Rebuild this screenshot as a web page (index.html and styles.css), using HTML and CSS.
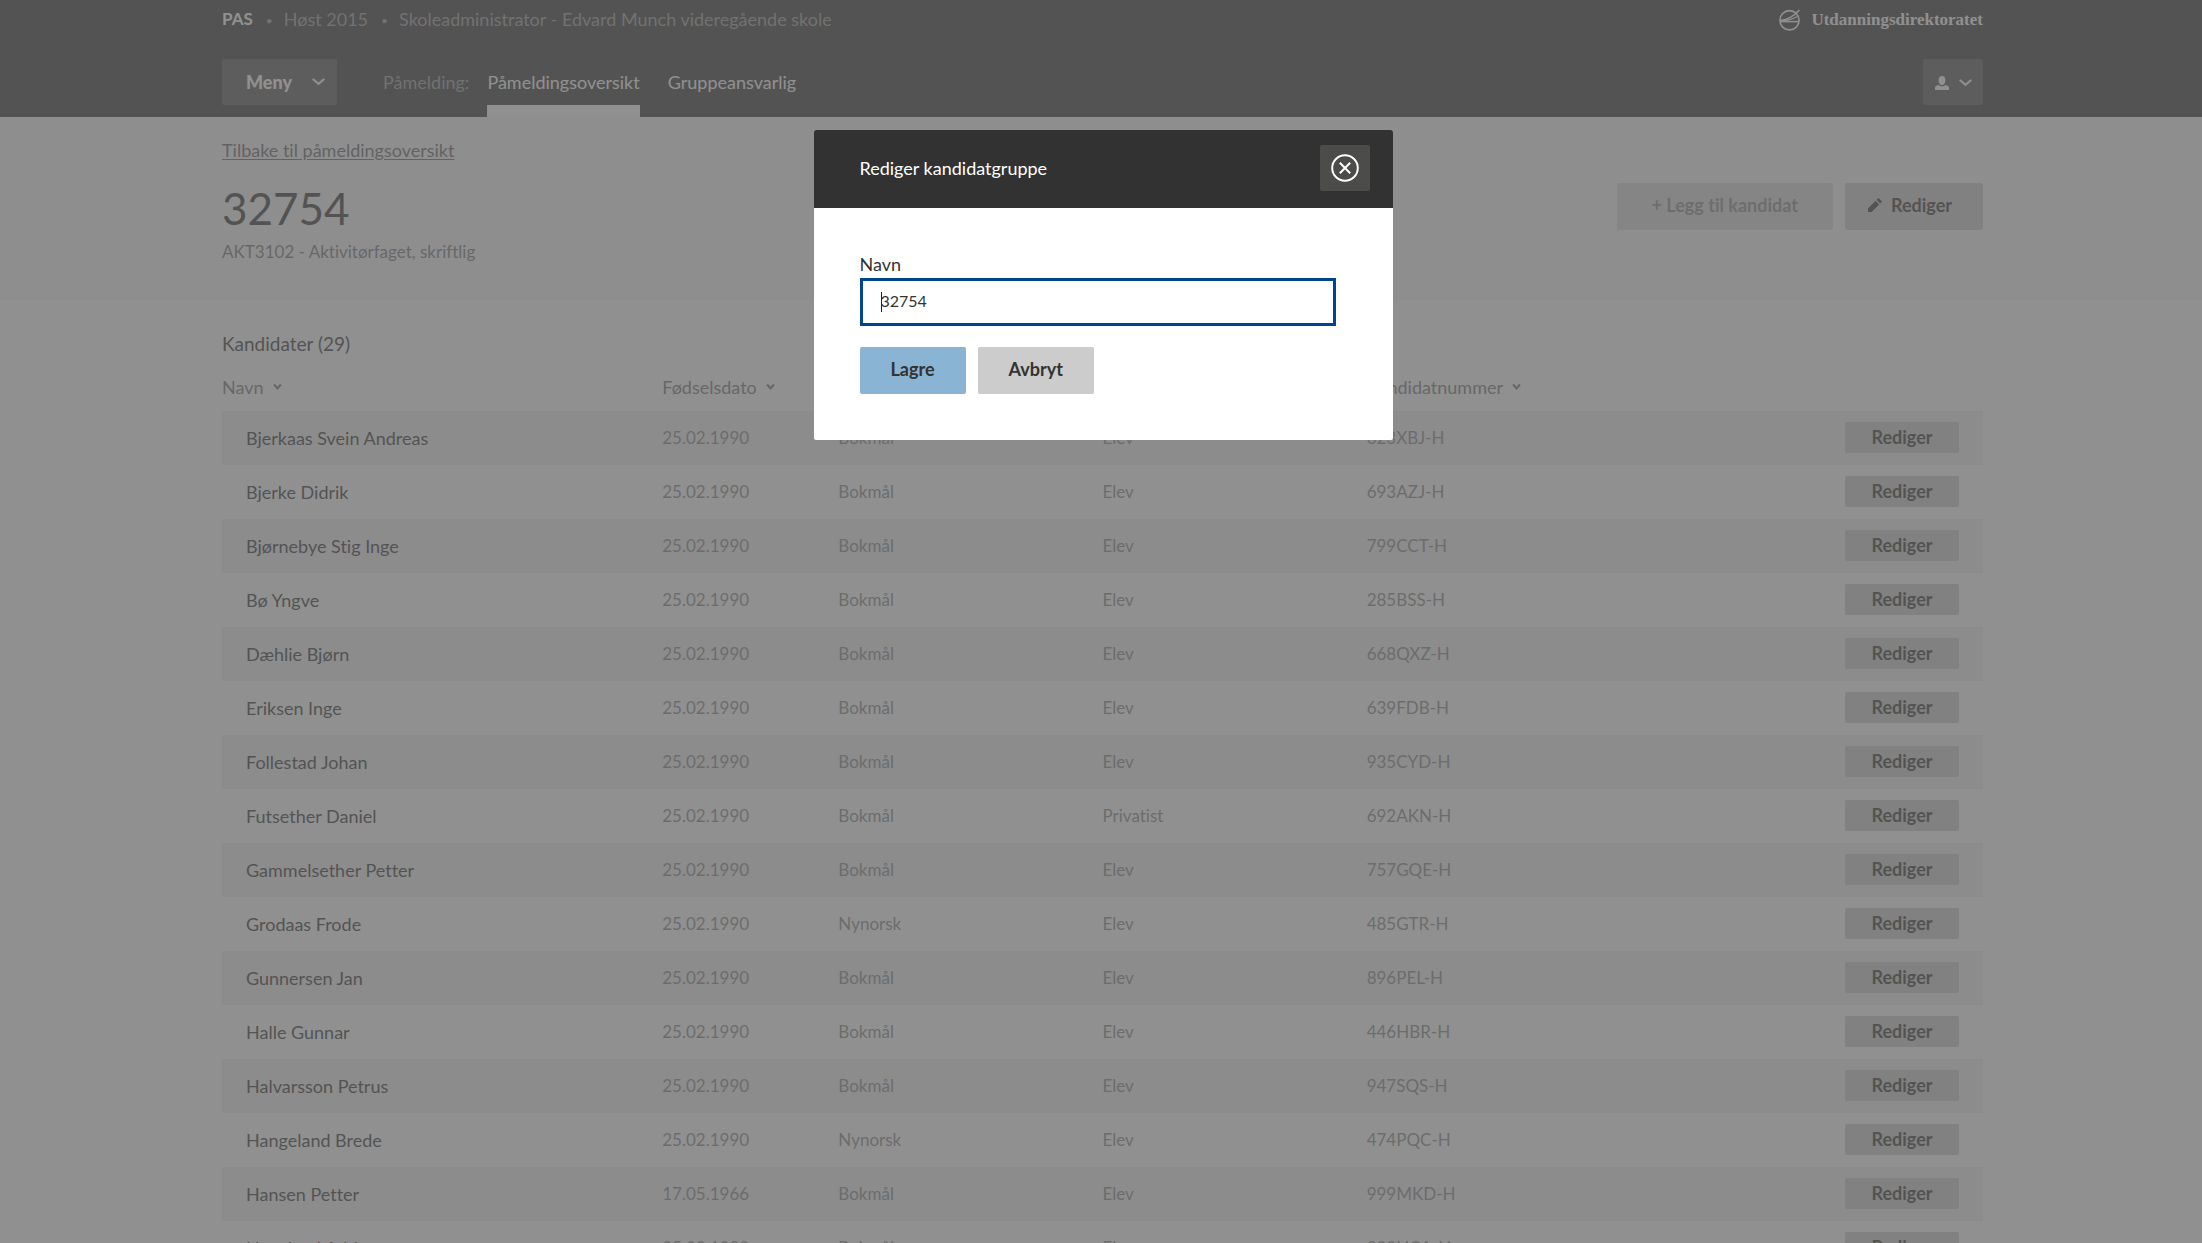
FILE: index.html
```html
<!DOCTYPE html>
<html lang="nb">
<head>
<meta charset="utf-8">
<title>PAS – Kandidatgruppe 32754</title>
<link rel="stylesheet" href="styles.css">
</head>
<body>
<svg class="sprite" aria-hidden="true">
  <symbol id="chevron" viewBox="0 0 14 8"><path d="M1.5 1.2 L7 6 L12.5 1.2" fill="none" stroke="currentColor" stroke-width="2.2" stroke-linecap="round"/></symbol>
  <symbol id="sort" viewBox="0 0 10 8"><path d="M1.2 1.2 L5 5.6 L8.8 1.2" fill="none" stroke="currentColor" stroke-width="2.4"/></symbol>
</svg>

<header class="site-header">
  <div class="topline">
    <ul class="context">
      <li class="product">PAS</li>
      <li>Høst 2015</li>
      <li>Skoleadministrator - Edvard Munch videregående skole</li>
    </ul>
    <a class="brand" href="#">
      <svg class="brand-mark" viewBox="0 0 22 22" aria-hidden="true"><g fill="none" stroke="currentColor"><circle cx="10.5" cy="11.3" r="9.6" stroke-width="1.7"/><path d="M1 11.6 C8 11 15 7 20.5 1" stroke-width="1.6"/><path d="M1 12 C8 11.6 14 10 18.5 7.4" stroke-width="1.2"/><path d="M1 12.6 H20" stroke-width="1.5"/></g></svg>
      <span>Utdanningsdirektoratet</span>
    </a>
  </div>
  <div class="mainline">
    <button class="menu-button" type="button">Meny <svg class="chevron" aria-hidden="true"><use href="#chevron"/></svg></button>
    <nav class="tabs">
      <span class="tabs-label">Påmelding:</span>
      <a class="tab active" href="#">Påmeldingsoversikt</a>
      <a class="tab" href="#">Gruppeansvarlig</a>
    </nav>
    <button class="user-button" type="button" aria-label="Bruker">
      <svg class="person" viewBox="0 0 14 14" aria-hidden="true"><path d="M7 0 C9.3 0 10.4 1.8 10.4 4.4 C10.4 7 9 9 7 9 C5 9 3.6 7 3.6 4.4 C3.6 1.8 4.7 0 7 0 Z M0 14 V11.6 C0 10 1.6 9.6 3.6 8.9 C5 10.6 9 10.6 10.4 8.9 C12.4 9.6 14 10 14 11.6 V14 Z" fill="currentColor"/></svg>
      <svg class="chevron" aria-hidden="true"><use href="#chevron"/></svg>
    </button>
  </div>
</header>

<section class="hero">
  <a class="back" href="#">Tilbake til påmeldingsoversikt</a>
  <div class="hero-row">
    <div>
      <h1>32754</h1>
      <p class="subject">AKT3102 - Aktivitørfaget, skriftlig</p>
    </div>
    <div class="actions">
      <button class="button add" type="button" disabled>+ Legg til kandidat</button>
      <button class="button edit" type="button"><svg class="pencil" viewBox="0 0 14 14" aria-hidden="true"><path d="M0 14 V10.4 L7.6 2.8 L11.2 6.4 L3.6 14 Z M8.6 1.8 L10.4 0 L14 3.6 L12.2 5.4 Z" fill="currentColor"/></svg>Rediger</button>
    </div>
  </div>
</section>

<main class="content">
  <h2>Kandidater (29)</h2>
  <table class="candidates">
    <thead>
      <tr><th class="c-name">Navn<svg class="sort"><use href="#sort"/></svg></th><th class="c-date">Fødselsdato<svg class="sort"><use href="#sort"/></svg></th><th class="c-lang">Målform<svg class="sort"><use href="#sort"/></svg></th><th class="c-type">Type<svg class="sort"><use href="#sort"/></svg></th><th colspan="2">Kandidatnummer<svg class="sort"><use href="#sort"/></svg></th></tr>
    </thead>
    <tbody>
      <tr><td>Bjerkaas Svein Andreas</td><td>25.02.1990</td><td>Bokmål</td><td>Elev</td><td>623XBJ-H</td><td><button class="row-button" type="button">Rediger</button></td></tr>
      <tr><td>Bjerke Didrik</td><td>25.02.1990</td><td>Bokmål</td><td>Elev</td><td>693AZJ-H</td><td><button class="row-button" type="button">Rediger</button></td></tr>
      <tr><td>Bjørnebye Stig Inge</td><td>25.02.1990</td><td>Bokmål</td><td>Elev</td><td>799CCT-H</td><td><button class="row-button" type="button">Rediger</button></td></tr>
      <tr><td>Bø Yngve</td><td>25.02.1990</td><td>Bokmål</td><td>Elev</td><td>285BSS-H</td><td><button class="row-button" type="button">Rediger</button></td></tr>
      <tr><td>Dæhlie Bjørn</td><td>25.02.1990</td><td>Bokmål</td><td>Elev</td><td>668QXZ-H</td><td><button class="row-button" type="button">Rediger</button></td></tr>
      <tr><td>Eriksen Inge</td><td>25.02.1990</td><td>Bokmål</td><td>Elev</td><td>639FDB-H</td><td><button class="row-button" type="button">Rediger</button></td></tr>
      <tr><td>Follestad Johan</td><td>25.02.1990</td><td>Bokmål</td><td>Elev</td><td>935CYD-H</td><td><button class="row-button" type="button">Rediger</button></td></tr>
      <tr><td>Futsether Daniel</td><td>25.02.1990</td><td>Bokmål</td><td>Privatist</td><td>692AKN-H</td><td><button class="row-button" type="button">Rediger</button></td></tr>
      <tr><td>Gammelsether Petter</td><td>25.02.1990</td><td>Bokmål</td><td>Elev</td><td>757GQE-H</td><td><button class="row-button" type="button">Rediger</button></td></tr>
      <tr><td>Grodaas Frode</td><td>25.02.1990</td><td>Nynorsk</td><td>Elev</td><td>485GTR-H</td><td><button class="row-button" type="button">Rediger</button></td></tr>
      <tr><td>Gunnersen Jan</td><td>25.02.1990</td><td>Bokmål</td><td>Elev</td><td>896PEL-H</td><td><button class="row-button" type="button">Rediger</button></td></tr>
      <tr><td>Halle Gunnar</td><td>25.02.1990</td><td>Bokmål</td><td>Elev</td><td>446HBR-H</td><td><button class="row-button" type="button">Rediger</button></td></tr>
      <tr><td>Halvarsson Petrus</td><td>25.02.1990</td><td>Bokmål</td><td>Elev</td><td>947SQS-H</td><td><button class="row-button" type="button">Rediger</button></td></tr>
      <tr><td>Hangeland Brede</td><td>25.02.1990</td><td>Nynorsk</td><td>Elev</td><td>474PQC-H</td><td><button class="row-button" type="button">Rediger</button></td></tr>
      <tr><td>Hansen Petter</td><td>17.05.1966</td><td>Bokmål</td><td>Elev</td><td>999MKD-H</td><td><button class="row-button" type="button">Rediger</button></td></tr>
      <tr><td>Haugland Adrian</td><td>25.02.1990</td><td>Bokmål</td><td>Elev</td><td>223HCA-H</td><td><button class="row-button" type="button">Rediger</button></td></tr>
    </tbody>
  </table>
</main>

<div class="overlay">
  <div class="dialog" role="dialog" aria-modal="true" aria-labelledby="dialog-title">
    <div class="dialog-header">
      <h2 id="dialog-title">Rediger kandidatgruppe</h2>
      <button class="close" type="button" aria-label="Lukk"><svg viewBox="0 0 28 28" aria-hidden="true"><g fill="none" stroke="currentColor" stroke-width="2"><circle cx="14" cy="14" r="12.8"/><path d="M8.8 8.8 L19.2 19.2 M19.2 8.8 L8.8 19.2"/></g></svg></button>
    </div>
    <form class="dialog-body">
      <label for="group-name">Navn</label>
      <div class="field"><input id="group-name" type="text" value="32754"><span class="caret"></span></div>
      <div class="dialog-actions">
        <button class="button primary" type="button">Lagre</button>
        <button class="button" type="button">Avbryt</button>
      </div>
    </form>
  </div>
</div>
</body>
</html>
```
FILE: styles.css
```css
* { box-sizing: border-box; }

html { height: 100%; }

body {
  margin: 0;
  height: 100%;
  overflow: hidden;
  background: #fff;
  color: #333;
  font-family: Lato, "Noto Sans", sans-serif;
  font-size: 18px;
  font-variant-ligatures: none;
  line-height: 24px;
}

h1, h2, p, ul { margin: 0; padding: 0; font-weight: 400; }
button, input { font: inherit; color: #333; border: 0; }
svg { display: block; }
.sprite { display: none; }

.site-header, .hero, .content { padding-left: 222px; padding-right: 219px; }

/* Header */
.site-header { background: #333; color: #fff; }
.topline { display: flex; justify-content: space-between; align-items: center; height: 40px; }
.context { display: flex; list-style: none; color: #999; }
.context li + li::before { content: "•"; margin: 0 11px 0 13px; font-size: 12px; vertical-align: 1px; }
.product { color: #fff; font-weight: 700; font-size: 17px; }
.brand {
  display: flex; align-items: center; gap: 10px;
  color: #fff; text-decoration: none;
  font: 700 17px/24px "Liberation Serif", serif;
}
.brand-mark { width: 22px; height: 22px; }
.mainline { display: flex; align-items: flex-start; height: 77px; padding-top: 19px; }
.menu-button, .user-button {
  display: flex; align-items: center; height: 46px;
  background: #555; color: #fff; border-radius: 2px;
}
.menu-button { gap: 20px; padding: 0 12px 0 24px; font-weight: 900; }
.user-button { gap: 10px; padding: 2px 11px 0 12px; margin-left: auto; }
.chevron { width: 13px; height: 8px; }
.person { width: 14px; height: 14px; }
.tabs { display: flex; margin-left: 46px; height: 58px; line-height: 46px; }
.tabs-label { color: #999; margin-right: 18px; }
.tab { color: #fff; text-decoration: none; margin-right: 28px; }
.active { border-bottom: 12px solid #fff; }

/* Group heading */
.hero { height: 183px; padding-top: 21px; background: #f9f9f9; border-bottom: 1px solid #f3f3f3; }
.back { color: #666; text-underline-offset: 2px; }
.hero-row { display: flex; justify-content: space-between; align-items: flex-start; padding-top: 16px; }
h1 { font-size: 44px; line-height: 60px; }
.subject { margin-top: 2px; color: #777; font-size: 17px; }
.actions { display: flex; gap: 12px; padding-top: 5px; }
.button {
  display: flex; align-items: center; justify-content: center;
  height: 47px; padding: 0 31px 3px; background: #ccc; border-radius: 2px; font-weight: 700;
}
.add { padding: 0 35px 3px; background: #dadada; color: #8a8a8a; }
.edit { padding: 0 31px 3px 23px; gap: 9px; }
.pencil { width: 14px; height: 14px; }

/* Candidate table */
.content { padding-top: 32px; }
.content h2 { font-size: 19px; }
.candidates { width: 100%; table-layout: fixed; border-collapse: collapse; margin-top: 10px; }
.candidates th { height: 45px; padding: 0 0 3px; text-align: left; font-weight: 400; color: #777; }
.c-name { width: 25%; }
.c-date { width: 10%; }
.c-lang, .c-type { width: 15%; }
.sort { display: inline-block; width: 9px; height: 8px; margin-left: 9px; vertical-align: 3px; }
.candidates td { height: 54px; padding: 0; color: #888; font-size: 17px; }
.candidates tbody tr:nth-child(odd) { background: #f0f0f0; }
.candidates td:first-child { padding: 0 0 1px 24px; color: #333; font-size: 18px; }
.candidates td:last-child { padding: 0 24px 2px 0; }
.row-button {
  display: block; margin-left: auto; width: 114px; height: 31px; padding: 0;
  background: #ccc; border-radius: 2px; font-size: 18px; font-weight: 700;
}

/* Dialog */
.overlay {
  position: fixed; inset: 0;
  display: flex; justify-content: center; align-items: flex-start;
  padding: 130px 0 0 4px;
  background: rgba(97, 97, 97, .7);
}
.dialog { width: 579px; background: #fff; border-radius: 2px; overflow: hidden; }
.dialog-header {
  display: flex; justify-content: space-between; align-items: center;
  height: 78px; padding: 0 23px 2px 46px; background: #323232; color: #fff;
}
.dialog-header h2 { font-size: 18px; }
.close {
  display: grid; place-items: center; width: 50px; height: 46px; padding: 0;
  background: #4c4c4b; color: #fff; border-radius: 2px;
}
.close svg { width: 28px; height: 28px; }
.dialog-body { padding: 44px 57px 46px 46px; }
.dialog-body label { display: block; }
.field { position: relative; margin-top: 2px; }
.field input {
  display: block; width: 100%; height: 48px; padding: 0 18px 3px;
  background: #fff; border: 3px solid #00468e; outline: 0; font-size: 16px;
}
.caret { position: absolute; left: 21px; top: 14px; width: 1px; height: 20px; background: #222; }
.dialog-actions { display: flex; gap: 12px; margin-top: 21px; }
.primary { background: #8ab4d4; }
```
